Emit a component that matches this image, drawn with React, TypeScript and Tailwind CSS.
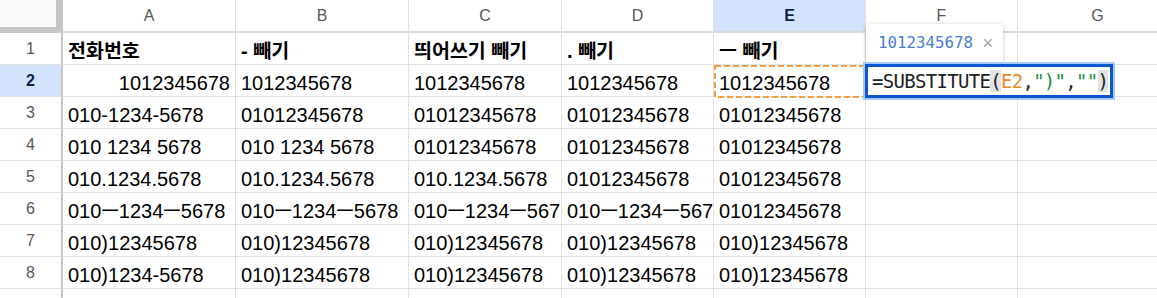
import React from "react";

const COLS = [
  { key: "A", w: "w-[173px]" },
  { key: "B", w: "w-[173px]" },
  { key: "C", w: "w-[153px]" },
  { key: "D", w: "w-[152px]" },
  { key: "E", w: "w-[152px]" },
  { key: "F", w: "w-[152px]" },
  { key: "G", w: "w-[160px]" },
];

const DATA: string[][] = [
  ["전화번호", "- 빼기", "띄어쓰기 빼기", ". 빼기", "ㅡ 빼기", "", ""],
  ["1012345678", "1012345678", "1012345678", "1012345678", "1012345678", "", ""],
  ["010-1234-5678", "01012345678", "01012345678", "01012345678", "01012345678", "", ""],
  ["010 1234 5678", "010 1234 5678", "01012345678", "01012345678", "01012345678", "", ""],
  ["010.1234.5678", "010.1234.5678", "010.1234.5678", "01012345678", "01012345678", "", ""],
  ["010ㅡ1234ㅡ5678", "010ㅡ1234ㅡ5678", "010ㅡ1234ㅡ5678", "010ㅡ1234ㅡ5678", "01012345678", "", ""],
  ["010)12345678", "010)12345678", "010)12345678", "010)12345678", "010)12345678", "", ""],
  ["010)1234-5678", "010)12345678", "010)12345678", "010)12345678", "010)12345678", "", ""],
  ["", "", "", "", "", "", ""],
];

function splitRuns(text: string) {
  const runs: { t: string; k: boolean }[] = [];
  for (const ch of text) {
    const k = /[\u3130-\u318F\uAC00-\uD7AF]/.test(ch);
    const last = runs[runs.length - 1];
    if (last && last.k === k) last.t += ch;
    else runs.push({ t: ch, k });
  }
  return runs;
}

function CellText({ text, bold }: { text: string; bold: boolean }) {
  return (
    <span className="whitespace-pre">
      {splitRuns(text).map((r, i) =>
        r.k ? (
          <span
            key={i}
            className={
              bold
                ? "text-[19.5px] font-['Noto_Sans_CJK_KR',sans-serif]"
                : "text-[19px] font-medium font-['Noto_Sans_CJK_KR',sans-serif]"
            }
          >
            {r.t}
          </span>
        ) : (
          <span key={i}>{r.t}</span>
        )
      )}
    </span>
  );
}

export default function App() {
  return (
    <div className="relative w-[1157px] h-[298px] overflow-hidden bg-white font-['Liberation_Sans','Noto_Sans_CJK_KR',sans-serif]">
      {/* column header row */}
      <div className="flex h-[33px]">
        <div className="w-[63px] h-[33px] shrink-0 bg-[#c4c7c5]">
          <div className="w-[56px] h-[27px] bg-[#f8f9fa]" />
        </div>
        {COLS.map((c) => (
          <div
            key={c.key}
            className={`${c.w} shrink-0 h-[33px] border-r border-[#e1e1e1] flex flex-col`}
          >
            <div
              className={
                c.key === "E"
                  ? "flex-1 flex items-center justify-center bg-[#d3e3fd] text-[16px] font-bold text-[#0b1f4a]"
                  : "flex-1 flex items-center justify-center text-[16px] text-[#575757]"
              }
            >
              {c.key}
            </div>
            <div className="h-[2px] bg-[#dadada]" />
          </div>
        ))}
      </div>

      {/* data rows */}
      {DATA.map((row, ri) => {
        const rowNum = ri + 1;
        return (
          <div key={ri} className="flex h-[32px]">
            <div
              className={
                rowNum === 2
                  ? "w-[63px] shrink-0 h-[32px] border-r-2 border-r-[#c4c7c5] border-b border-b-[#e1e1e1] bg-[#d3e3fd] flex items-center justify-center text-[16px] font-bold text-[#0b1f4a]"
                  : "w-[63px] shrink-0 h-[32px] border-r-2 border-r-[#c4c7c5] border-b border-b-[#e1e1e1] flex items-center justify-center text-[16px] text-[#575757]"
              }
            >
              {rowNum <= 8 ? rowNum : ""}
            </div>
            {COLS.map((c, ci) => {
              const text = row[ci];
              const right = rowNum === 2 && ci === 0;
              const bold = rowNum === 1;
              return (
                <div
                  key={c.key}
                  className={`${c.w} shrink-0 h-[32px] border-r border-b border-[#e1e1e1] overflow-hidden whitespace-nowrap flex items-end pb-[1px] px-[5px] leading-[23px] text-[20px] text-black ${
                    right ? "justify-end" : "justify-start"
                  } ${bold ? "font-bold" : ""}`}
                >
                  <CellText text={text} bold={bold} />
                </div>
              );
            })}
          </div>
        );
      })}

      {/* E2 reference marquee */}
      <svg
        className="absolute left-[714px] top-[65px]"
        width="153"
        height="33"
        viewBox="0 0 153 33"
      >
        <rect
          x="1"
          y="1"
          width="151"
          height="31"
          fill="none"
          stroke="#f0a040"
          strokeWidth="2"
          strokeDasharray="6 3"
        />
      </svg>

      {/* tooltip */}
      <div className="absolute left-[866px] top-[24px] w-[137px] h-[38px] bg-white rounded-[3px] shadow-[0_1px_4px_rgba(0,0,0,0.25)] flex items-center pl-[12px] pr-[10px] justify-between">
        <span className="text-[15.8px] text-[#4a7dd4] font-['DejaVu_Sans_Mono',monospace]">
          1012345678
        </span>
        <span className="text-[18px] text-[#a0a0a0] leading-none">×</span>
        <div className="absolute left-[6px] bottom-[-5px] w-[12px] h-[12px] bg-white rotate-45 shadow-[2px_2px_2px_rgba(0,0,0,0.12)]" />
      </div>

      {/* formula editor */}
      <div className="absolute left-[863px] top-[62px] w-[252px] h-[38px] border-2 border-[#a8c7fa]">
        <div className="w-full h-full border-[3px] border-[#0b57d0] bg-white flex items-center pl-[4px] whitespace-pre text-[19px] tracking-[-0.7px] text-[#202124] font-['DejaVu_Sans_Mono',monospace]">
          <span>
            =SUBSTITUTE<span className="bg-[#e3e3e3]">(</span>
            <span className="text-[#e8892a]">E2</span>,
            <span className="text-[#1e8e3e]">")"</span>,
            <span className="text-[#1e8e3e]">""</span>
            <span className="bg-[#e3e3e3]">)</span>
          </span>
        </div>
      </div>
    </div>
  );
}
